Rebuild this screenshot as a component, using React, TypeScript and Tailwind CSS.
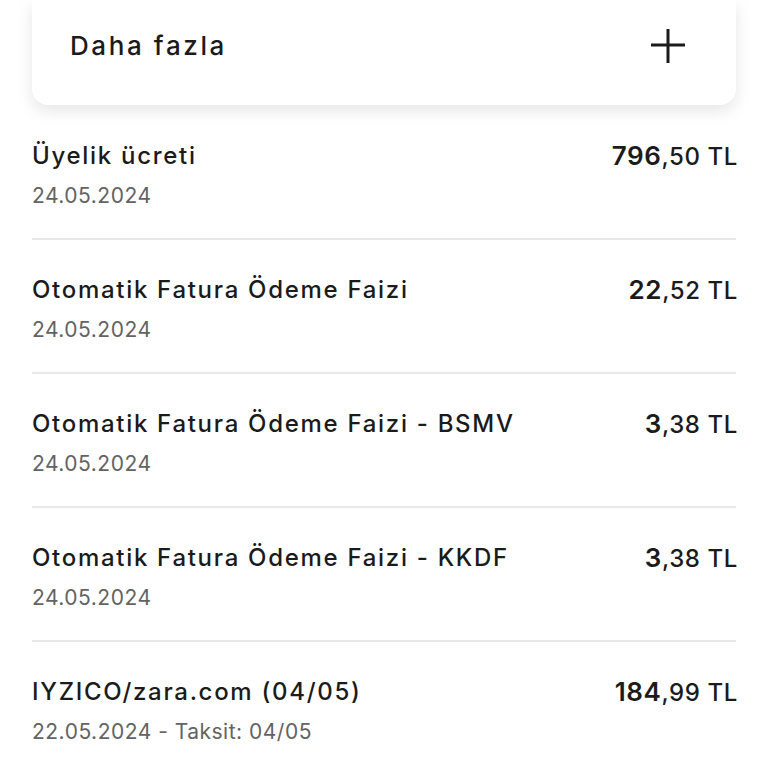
import React from 'react';

const items = [
  { title: 'Üyelik ücreti', date: '24.05.2024', whole: '796', frac: ',50 TL' },
  { title: 'Otomatik Fatura Ödeme Faizi', date: '24.05.2024', whole: '22', frac: ',52 TL' },
  { title: 'Otomatik Fatura Ödeme Faizi - BSMV', date: '24.05.2024', whole: '3', frac: ',38 TL' },
  { title: 'Otomatik Fatura Ödeme Faizi - KKDF', date: '24.05.2024', whole: '3', frac: ',38 TL' },
  { title: 'IYZICO/zara.com (04/05)', date: '22.05.2024 - Taksit: 04/05', whole: '184', frac: ',99 TL' },
];

export default function App() {
  return (
    <div className="min-h-screen bg-white px-8 font-['Inter',sans-serif] text-[#1b1b1b] overflow-hidden h-[768px]">
      {/* More card */}
      <div className="h-[105px] flex items-center justify-between pl-[38px] pr-[50px] pb-[14px] bg-white rounded-b-[16px] shadow-[0_6px_16px_rgba(0,0,0,0.10)]">
        <span className="text-[26px] font-medium tracking-[2.6px]">Daha fazla</span>
        <svg width="36" height="36" viewBox="0 0 36 36" className="text-[#1b1b1b]">
          <path d="M18 1v34M1 17h34" stroke="currentColor" strokeWidth="3" fill="none" />
        </svg>
      </div>

      <div className="mt-[35px]">
        {items.map((it, i) => (
          <div
            key={i}
            className={`flex justify-between pb-[28px] ${i > 0 ? 'pt-[34px]' : ''} ${i < items.length - 1 ? 'border-b-2 border-[#e8e8e8]' : ''}`}
          >
            <div className="flex flex-col">
              <span className="text-[24px] leading-[32px] font-medium tracking-[1.7px]">{it.title}</span>
              <span className="text-[21px] leading-[28px] mt-[10px] text-[#636363] tracking-[0.5px]">{it.date}</span>
            </div>
            <div className="text-[24px] leading-[32px] whitespace-nowrap tracking-[0.6px] -mr-[2px]">
              <span className="font-semibold text-[26px]">{it.whole}</span>
              <span className="font-medium">{it.frac}</span>
            </div>
          </div>
        ))}
      </div>
    </div>
  );
}
